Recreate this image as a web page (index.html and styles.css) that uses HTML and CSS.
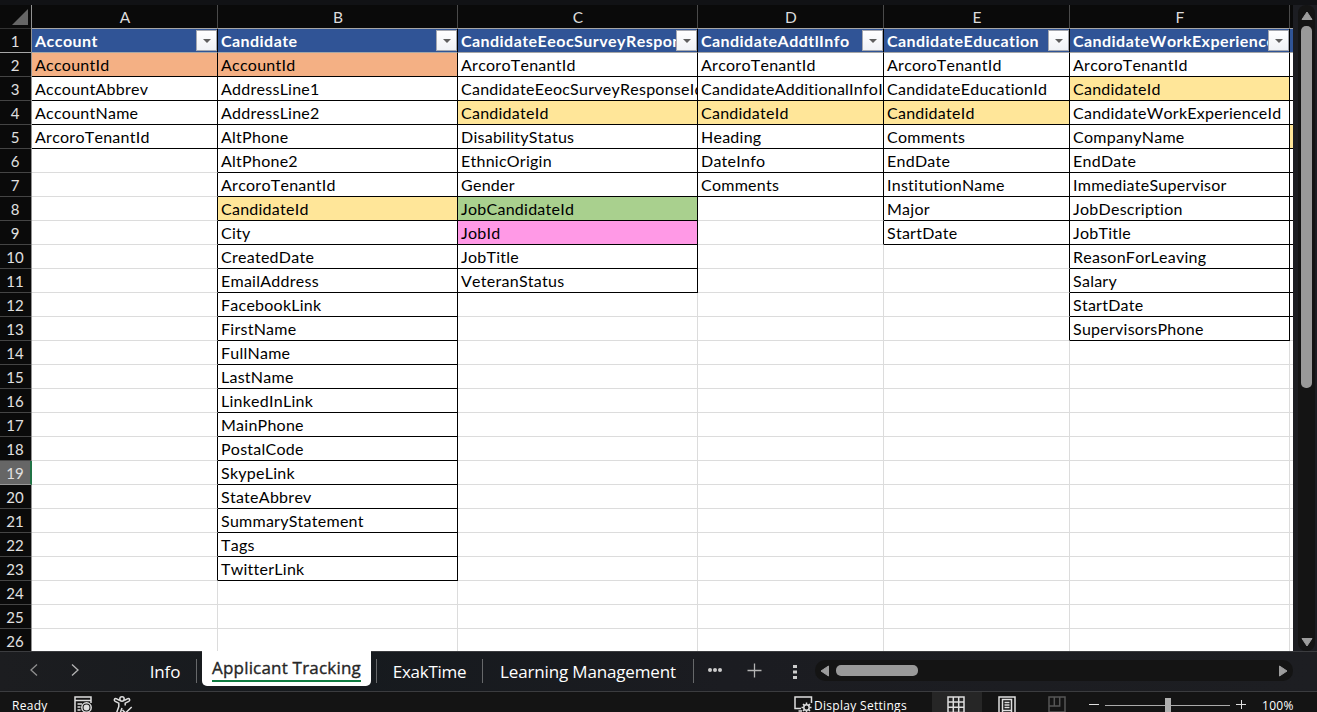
FILE: index.html
```html
<!DOCTYPE html>
<html lang="en">
<head>
    <meta charset="UTF-8">
    <meta name="viewport" content="width=device-width, initial-scale=1.0">
    <title>Applicant Tracking</title>
    <link rel="stylesheet" href="styles.css">
</head>
<body>
    <div class="top-strip"></div>

    <div class="workarea">
        <div class="sheet" id="sheet"></div>
        <div class="vscroll">
            <svg width="12" height="10" viewBox="0 0 12 10"><path d="M6 1 L11 8.5 H1 Z"/></svg>
            <div class="vthumb"></div>
            <svg class="down" width="12" height="10" viewBox="0 0 12 10"><path d="M6 9 L11 1.5 H1 Z"/></svg>
        </div>
    </div>

    <div class="tabbar">
        <svg class="nav prev" width="10" height="14" viewBox="0 0 10 14"><path d="M8 1.5 L2 7 L8 12.5"/></svg>
        <svg class="nav next" width="10" height="14" viewBox="0 0 10 14"><path d="M2 1.5 L8 7 L2 12.5"/></svg>
        <div class="tab info"><span>Info</span></div>
        <div class="tab active"><span>Applicant Tracking</span></div>
        <div class="tab exak"><span>ExakTime</span></div>
        <div class="tab learning"><span>Learning Management</span></div>
        <svg class="more" width="16" height="6" viewBox="0 0 16 6"><circle cx="3" cy="3" r="2"/><circle cx="8" cy="3" r="2"/><circle cx="13" cy="3" r="2"/></svg>
        <svg class="add" width="15" height="15" viewBox="0 0 15 15"><path d="M7.5 0.5 V14.5 M0.5 7.5 H14.5"/></svg>
        <svg class="grip" width="4" height="14" viewBox="0 0 4 14"><path d="M0 0h4v3H0z M0 5.5h4v3H0z M0 11h4v3H0z"/></svg>
        <div class="hscroll">
            <svg width="10" height="12" viewBox="0 0 10 12"><path d="M1 6 L8.5 1 V11 Z"/></svg>
            <div class="hthumb"></div>
            <svg class="right" width="10" height="12" viewBox="0 0 10 12"><path d="M9 6 L1.5 1 V11 Z"/></svg>
        </div>
    </div>

    <div class="statusbar">
        <span class="ready">Ready</span>
        <svg class="macro" width="19" height="17" viewBox="0 0 19 17">
            <path d="M1 17 V1 H17 V7 M1 4.5 H17 M3.5 8 H8 M3.5 11 H6.5 M3.5 14 H6.5" />
            <circle cx="12.5" cy="11.5" r="4.7"/><circle class="dot" cx="12.5" cy="11.5" r="2.2"/>
        </svg>
        <svg class="access" width="20" height="18" viewBox="0 0 20 18">
            <circle cx="9" cy="3" r="2.2"/>
            <path d="M6.8 4.5 L3.2 2.7 C1.4 2.1 .6 4.4 2.2 5.3 L5.8 7.2 V10.5 L3.5 17 M11.2 4.5 L14.8 2.7 C16.6 2.1 17.4 4.4 15.8 5.3 L12.2 7.2 V9.5 M7 17.5 L9 12 M9.5 14 L12.5 17 L18.7 11"/>
        </svg>
        <svg class="display" width="19" height="17" viewBox="0 0 19 17">
            <path d="M7 12.5 H1 V1 H17.5 V7 M4.5 15 H8"/>
            <circle cx="12.5" cy="11.5" r="2.7"/>
            <path d="M12.5 6.5v2 M12.5 14.5v2 M7.5 11.5h2 M15.5 11.5h2 M9 8l1.4 1.4 M14.6 13.6L16 15 M16 8l-1.4 1.4 M9 15l1.4-1.4"/>
        </svg>
        <span class="settings">Display Settings</span>
        <div class="view current">
            <svg width="18" height="17" viewBox="0 0 18 17"><path d="M1 17 V1 H17 V17 M6.3 1 V17 M11.7 1 V17 M1 6 H17 M1 11.3 H17 M1 16.5 H17"/></svg>
        </div>
        <svg class="layout" width="18" height="17" viewBox="0 0 18 17"><path d="M1 17 V1 H17 V17 M4.5 17 V3.5 H13.5 V17 M6.5 6.5 H11.5 M6.5 9 H11.5 M6.5 11.5 H11.5 M5 14.5 H13"/></svg>
        <svg class="breaks" width="18" height="17" viewBox="0 0 18 17"><path d="M1 17 V1 H17 V17 M6.3 1 V10 M11.7 1 V10 H1 M1 16 H17"/></svg>
        <svg class="minus" width="10" height="10" viewBox="0 0 10 10"><path d="M0 5.5 H10"/></svg>
        <div class="slider"><div class="knob"></div></div>
        <svg class="plus" width="10" height="10" viewBox="0 0 10 10"><path d="M0 5.5 H10 M5.5 1 V10"/></svg>
        <span class="zoom">100%</span>
    </div>

    <script>
        const ROWS = 26;
        const SELECTED_ROW = 19;

        // "name|color" fills the cell with that color
        const columns = [
            { letter: 'A', size: 'narrow', cells: ['Account', 'AccountId|orange', 'AccountAbbrev', 'AccountName', 'ArcoroTenantId'] },
            { letter: 'B', size: 'wide', cells: ['Candidate', 'AccountId|orange', 'AddressLine1', 'AddressLine2', 'AltPhone', 'AltPhone2',
                'ArcoroTenantId', 'CandidateId|yellow', 'City', 'CreatedDate', 'EmailAddress', 'FacebookLink', 'FirstName', 'FullName',
                'LastName', 'LinkedInLink', 'MainPhone', 'PostalCode', 'SkypeLink', 'StateAbbrev', 'SummaryStatement', 'Tags', 'TwitterLink'] },
            { letter: 'C', size: 'wide', cells: ['CandidateEeocSurveyResponse', 'ArcoroTenantId', 'CandidateEeocSurveyResponseId', 'CandidateId|yellow',
                'DisabilityStatus', 'EthnicOrigin', 'Gender', 'JobCandidateId|green', 'JobId|pink', 'JobTitle', 'VeteranStatus'] },
            { letter: 'D', size: 'narrow', cells: ['CandidateAddtlInfo', 'ArcoroTenantId', 'CandidateAdditionalInfoId', 'CandidateId|yellow',
                'Heading', 'DateInfo', 'Comments'] },
            { letter: 'E', size: 'narrow', cells: ['CandidateEducation', 'ArcoroTenantId', 'CandidateEducationId', 'CandidateId|yellow',
                'Comments', 'EndDate', 'InstitutionName', 'Major', 'StartDate'] },
            { letter: 'F', size: 'medium', cells: ['CandidateWorkExperience', 'ArcoroTenantId', 'CandidateId|yellow', 'CandidateWorkExperienceId',
                'CompanyName', 'EndDate', 'ImmediateSupervisor', 'JobDescription', 'JobTitle', 'ReasonForLeaving', 'Salary', 'StartDate', 'SupervisorsPhone'] },
            { letter: '', size: 'cut', cells: ['', '', '', '', '|yellow', '', '', '', '', '', '', ''] }
        ];

        const arrow = '<span class="filter"><svg width="8" height="4" viewBox="0 0 8 4"><path d="M0 0h8L4 4z"/></svg></span>';

        let html = '<div class="rownums"><div class="corner"><svg width="16" height="16" viewBox="0 0 16 16"><path d="M16 0V16H0z"/></svg></div>';
        for (let r = 1; r <= ROWS; r++) {
            html += `<div class="rownum${r === SELECTED_ROW ? ' selected' : ''}${r === 1 ? ' frozen' : ''}">${r}</div>`;
        }
        html += '</div>';

        columns.forEach((col, i) => {
            const next = columns[i + 1] ? columns[i + 1].cells.length : 0;
            html += `<div class="column ${col.size}"><div class="letter">${col.letter}</div>`;
            for (let r = 0; r < ROWS; r++) {
                const [text, color] = (col.cells[r] || '').split('|');
                let cls = 'cell';
                if (r === 0) cls += ' head';
                if (r < col.cells.length) cls += ' lined';
                if (r < next) cls += ' edge';
                if (color) cls += ' ' + color;
                html += `<div class="${cls}">${text}${r === 0 && col.letter ? arrow : ''}</div>`;
            }
            html += '</div>';
        });

        document.getElementById('sheet').innerHTML = html;
    </script>
</body>
</html>
```
FILE: styles.css
```css
* {
    box-sizing: border-box;
}
body {
    margin: 0;
    width: 1317px;
    height: 712px;
    overflow: hidden;
    background: #141414;
    color: white;
    font-family: "Open Sans", sans-serif;
}
svg {
    display: block;
    flex: none;
}
.top-strip {
    height: 5px;
    background: #111215;
}

/* sheet */
.workarea {
    display: flex;
    height: 646px;
    background: #1c1d22;
}
.sheet {
    display: flex;
    width: 1293px;
    height: 646px;
    overflow: hidden;
    background: white;
    font-family: Lato, sans-serif;
    font-size: 16px;
    font-kerning: none;
}
.rownums {
    flex: none;
    width: 32px;
    background: #0a0a0a;
    color: #e0e0e0;
    border-right: 1px solid #929292;
    font-size: 15px;
}
.corner {
    height: 24px;
    padding: 4px 0 0 12px;
    border-bottom: 1px solid #333;
}
.corner svg {
    fill: #666;
}
.rownum {
    height: 24px;
    line-height: 24px;
    padding-right: 1px;
    text-align: center;
    border-bottom: 1px solid #444;
}
.rownum.frozen {
    border-bottom-color: #a6a6a6;
}
.rownum.selected {
    width: 32px;
    background: #666;
    padding-right: 0;
    border-right: 2px solid #217346;
    border-bottom-color: #999;
}
.column {
    flex: none;
}
.narrow {
    width: 186px;
}
.wide {
    width: 240px;
}
.medium {
    width: 220px;
}
.cut {
    width: 40px;
}
.letter {
    height: 24px;
    line-height: 24px;
    font-size: 15.5px;
    padding-left: 1px;
    text-align: center;
    background: #0a0a0a;
    color: #dcdcdc;
    border-right: 1px solid #4a4a4a;
    border-bottom: 1px solid #a6a6a6;
}
.cell {
    position: relative;
    height: 24px;
    line-height: 23px;
    padding-left: 3px;
    overflow: hidden;
    white-space: nowrap;
    letter-spacing: 0.25px;
    color: black;
    border-right: 1px solid #dcdcdc;
    border-bottom: 1px solid #dcdcdc;
}
.lined {
    border-color: black;
}
.edge {
    border-right-color: black;
}
.head {
    background: #305496;
    color: white;
    font-weight: bold;
    letter-spacing: 0.45px;
    border-bottom-color: #a6a6a6;
}
.orange {
    background: #f4b084;
}
.yellow {
    background: #ffe699;
}
.green {
    background: #a9d08e;
}
.pink {
    background: #ff99e6;
}
.filter {
    position: absolute;
    top: 1px;
    right: 0;
    width: 21px;
    height: 21px;
    display: flex;
    align-items: center;
    justify-content: center;
    background: linear-gradient(#fff, #f0f2f6);
    border: 1px solid #a5a8b0;
}
.filter svg {
    fill: #5f5f5f;
}

/* scrollbars */
.vscroll {
    width: 17px;
    margin-left: 5px;
    padding: 6px 0 4px;
    display: flex;
    flex-direction: column;
    align-items: center;
    background: #141414;
    border-radius: 8px;
}
.vscroll svg, .hscroll svg {
    fill: #9d9d9d;
    stroke: #9d9d9d;
    stroke-linejoin: round;
}
.vthumb {
    width: 11px;
    height: 362px;
    margin-top: 5px;
    border-radius: 5px;
    background: #999;
}
.down {
    margin-top: auto;
}

/* sheet tabs */
.tabbar {
    display: flex;
    align-items: center;
    height: 41px;
    background: linear-gradient(90deg, #1c1d20, #161a1e 25%, #1b1c21 55%, #1d1e22);
    border-top: 1px solid #3b3c3f;
    border-bottom: 1px solid #3b3c3f;
    font-size: 17px;
}
.nav, .add {
    fill: none;
    stroke: #b4b4b4;
    stroke-width: 1.3;
}
.nav {
    margin-bottom: 3px;
}
.prev {
    margin-left: 29px;
    stroke: #909090;
}
.next {
    margin-left: 31px;
}
.tab {
    flex: none;
    display: flex;
    justify-content: center;
    height: 24px;
    line-height: 26px;
    margin-bottom: 1px;
    border-right: 1px solid #66686a;
    white-space: nowrap;
    letter-spacing: -0.15px;
}
.info {
    width: 64px;
    margin-left: 53px;
    padding-left: 1px;
}
.active {
    align-self: flex-start;
    width: 169px;
    height: 35px;
    line-height: 24px;
    margin: -1px 5px 0;
    padding-top: 5px;
    background: white;
    border: none;
    border-radius: 0 0 5px 5px;
    color: #262626;
    letter-spacing: 0.2px;
    -webkit-text-stroke: 0.35px #262626;
}
.active span {
    height: 26px;
    border-bottom: 2px solid #107c41;
}
.exak {
    width: 107px;
    border-left: 1px solid #66686a;
    letter-spacing: -0.3px;
}
.learning {
    width: 211px;
}
.more {
    margin: 0 0 3px 13px;
    fill: #ccc;
}
.add {
    margin: 0 0 2px 24px;
}
.grip {
    margin-left: 31px;
    fill: #ccc;
}
.hscroll {
    display: flex;
    align-items: center;
    width: 478px;
    height: 21px;
    margin: 0 0 2px 18px;
    padding: 0 5px;
    border-radius: 10px;
    background: #141414;
}
.hthumb {
    width: 82px;
    height: 11px;
    margin-left: 6px;
    border-radius: 5px;
    background: #999;
}
.right {
    margin-left: auto;
}

/* status bar, the bottom runs off the window */
.statusbar {
    display: flex;
    height: 28px;
    font-size: 12px;
    line-height: 27px;
    letter-spacing: 0.3px;
    white-space: nowrap;
    background: #141414;
}
.statusbar svg {
    margin-top: 4px;
    fill: none;
    stroke: #dedede;
    stroke-width: 1.5;
}
.ready {
    width: 37px;
    margin-left: 12px;
}
.statusbar .macro {
    margin-left: 25px;
}
.macro .dot {
    fill: #dedede;
}
.access {
    margin-left: 20px;
}
.display {
    margin-left: 661px;
}
.settings {
    width: 94px;
    margin-left: 1px;
}
.view {
    width: 50px;
    margin-left: 24px;
    padding-left: 15px;
    background: #262626;
}
.layout {
    margin-left: 16px;
}
.statusbar .breaks {
    margin-left: 32px;
    stroke: #555;
}
.statusbar .minus, .statusbar .plus {
    margin-top: 7px;
    stroke-width: 1;
}
.minus {
    margin-left: 23px;
}
.slider {
    width: 125px;
    height: 1px;
    margin: 13px 0 0 6px;
    background: #aaa;
}
.knob {
    width: 6px;
    height: 16px;
    margin-left: 60px;
    position: relative;
    top: -7px;
    background: #b0b0b0;
}
.plus {
    margin-left: 6px;
}
.zoom {
    margin-left: 16px;
}
```
